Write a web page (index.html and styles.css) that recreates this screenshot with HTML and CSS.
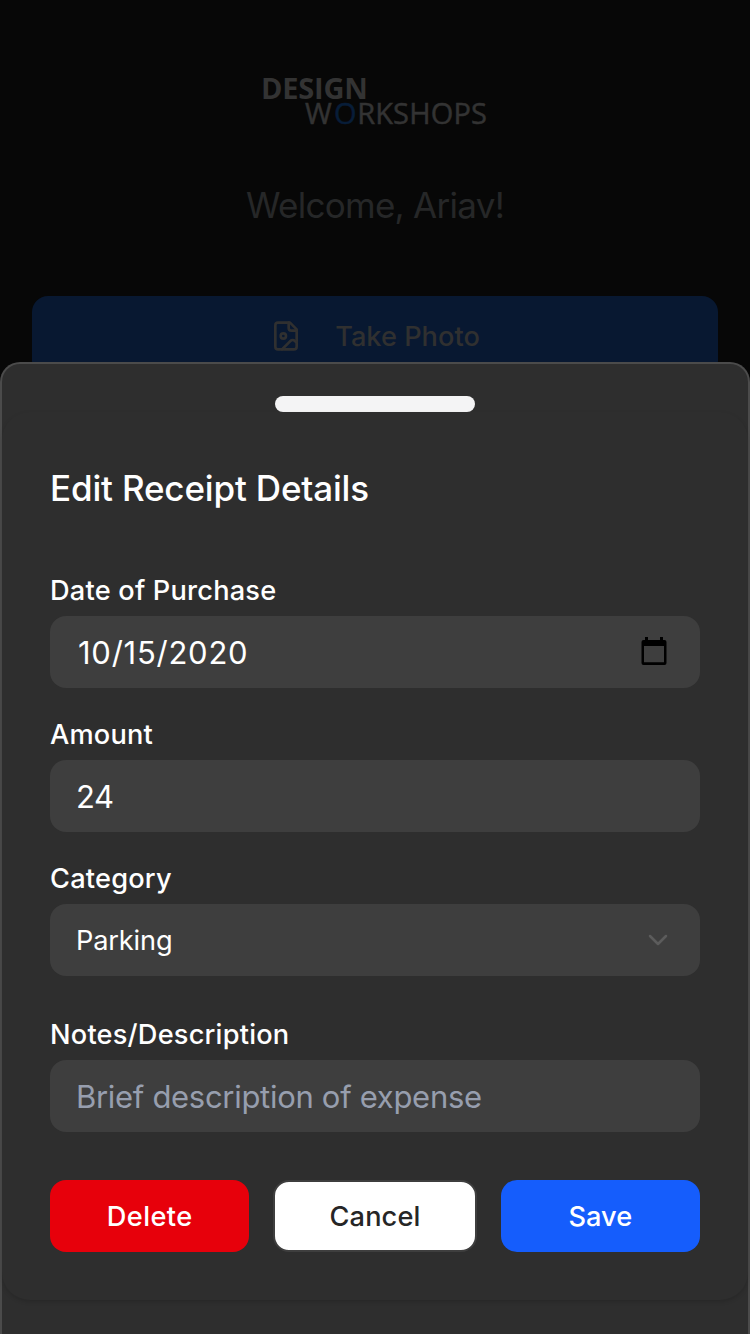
FILE: index.html
```html
<!DOCTYPE html>
<html lang="en">
  <head>
    <meta charset="utf-8">
    <title>Edit Receipt</title>
    <link rel="stylesheet" href="styles.css">
  </head>
  <body>
    <div class="home">
      <div class="logo">
        <div class="logo-top">DESIGN</div>
        <div class="logo-bottom">W<span>O</span>RKSHOPS</div>
      </div>
      <div class="welcome">Welcome, Ariav!</div>
      <div class="photo-button">
        <svg class="photo-icon" viewBox="0 0 24 24">
          <path d="M15 2H6a2 2 0 0 0-2 2v16a2 2 0 0 0 2 2h12a2 2 0 0 0 2-2V7Z"/>
          <path d="M14 2v4a2 2 0 0 0 2 2h4"/>
          <circle cx="10" cy="12" r="2"/>
          <path d="m20 17-1.296-1.296a2.41 2.41 0 0 0-3.408 0L9 22"/>
        </svg>
        <span>Take Photo</span>
      </div>
    </div>

    <div class="drawer">
      <div class="handle"></div>
      <form class="card">
        <h1>Edit Receipt Details</h1>

        <label for="date">Date of Purchase</label>
        <div class="field">
          <input id="date" class="date" value="10/15/2020">
          <svg class="calendar" viewBox="0 0 26 28">
            <path fill-rule="evenodd" d="M4 0h3v3h12V0h3v3h1.500a2 2 0 0 1 2 2v21a2 2 0 0 1-2 2h-21a2 2 0 0 1-2-2V5a2 2 0 0 1 2-2H4ZM3 9v16.300h20V9Z"/>
          </svg>
        </div>

        <label for="amount">Amount</label>
        <div class="field">
          <input id="amount" value="24">
        </div>

        <label>Category</label>
        <div class="field select">
          <span>Parking</span>
          <svg class="chevron" viewBox="0 0 20 12">
            <path d="M2 2l8 8 8-8"/>
          </svg>
        </div>

        <label for="notes" class="notes-label">Notes/Description</label>
        <div class="field">
          <input id="notes" placeholder="Brief description of expense">
        </div>

        <div class="buttons">
          <button type="button" class="delete">Delete</button>
          <button type="button" class="cancel">Cancel</button>
          <button type="button" class="save">Save</button>
        </div>
      </form>
    </div>
  </body>
</html>
```
FILE: styles.css
```css
html, body {
  margin: 0;
  width: 100%;
  height: 100%;
  overflow: hidden;
  background: #070707;
  font-family: Inter, 'Liberation Sans', sans-serif;
}

body {
  display: flex;
  flex-direction: column;
}

/* page behind the drawer */
.home {
  height: 362px;
  box-sizing: border-box;
  padding: 75px 32px 0;
  flex: none;
  overflow: hidden;
}

.logo {
  width: 228px;
  height: 53px;
  margin: 0 auto;
  color: #333;
  font-family: 'Open Sans', 'Noto Sans', sans-serif;
  font-size: 29px;
  line-height: 25px;
  white-space: nowrap;
}

.logo-top {
  font-weight: 700;
  letter-spacing: -0.2px;
}

.logo-bottom {
  padding-left: 44px;
  letter-spacing: 0.15px;
  -webkit-text-stroke: 0.5px;
}

.logo-bottom span {
  margin: 0 0.5px 0 2px;
  color: #071d38;
}

.welcome {
  margin-top: 53px;
  height: 48px;
  line-height: 48px;
  font-size: 35px;
  letter-spacing: -0.72px;
  text-align: center;
  color: #262728;
}

.photo-button {
  display: flex;
  justify-content: center;
  align-items: center;
  gap: 33px;
  margin-top: 67px;
  height: 80px;
  border-radius: 16px;
  background: #081831;
  color: #303030;
  font-size: 27.2px;
  font-weight: 500;
}

.photo-icon {
  width: 32px;
  height: 32px;
  fill: none;
  stroke: #303030;
  stroke-width: 2;
  stroke-linecap: round;
  stroke-linejoin: round;
}

/* drawer */
.drawer {
  flex: 1;
  box-sizing: border-box;
  border: 2px solid #4b4b4b;
  border-bottom: none;
  border-radius: 20px 20px 0 0;
  background: #2e2e2e;
  padding-top: 32px;
}

.handle {
  width: 200px;
  height: 16px;
  margin: 0 auto;
  border-radius: 8px;
  background: #f4f4f5;
}

.card {
  box-sizing: border-box;
  height: 888px;
  padding: 48px;
  border-radius: 28px;
  box-shadow: 0 2px 4px rgba(0, 0, 0, 0.15);
}

h1 {
  margin: 0 0 54px;
  font-size: 35px;
  line-height: 56px;
  font-weight: 500;
  letter-spacing: -0.17px;
  color: #fff;
}

label {
  display: block;
  height: 40px;
  line-height: 42px;
  margin: 26px 0 6px;
  font-size: 27.2px;
  font-weight: 500;
  letter-spacing: 0.2px;
  color: #fff;
}

.notes-label {
  margin-top: 38px;
}

.field {
  display: flex;
  align-items: center;
  justify-content: space-between;
  box-sizing: border-box;
  height: 72px;
  padding: 0 32px 0 26px;
  border-radius: 16px;
  background: #3e3e3e;
  color: #fff;
}

input {
  flex: 1;
  min-width: 0;
  padding: 0;
  border: none;
  outline: none;
  background: none;
  color: #fff;
  font-family: inherit;
  font-size: 31px;
  letter-spacing: -0.3px;
}

.date {
  padding-left: 2px;
  letter-spacing: 0.75px;
}

input::placeholder {
  color: #979eae;
}

.select {
  font-size: 27.2px;
  letter-spacing: -0.15px;
}

.calendar {
  width: 26px;
  height: 28px;
  margin: 0 1px 2px 0;
  fill: #000;
}

.chevron {
  width: 20px;
  height: 12px;
  fill: none;
  stroke: #5c5c5c;
  stroke-width: 2.5;
  stroke-linecap: round;
  stroke-linejoin: round;
}

.buttons {
  display: flex;
  gap: 24px;
  margin-top: 48px;
}

button {
  flex: 1;
  height: 72px;
  padding: 0;
  border: none;
  border-radius: 16px;
  color: #fff;
  font-family: inherit;
  font-size: 27.2px;
  font-weight: 500;
}

.delete {
  background: #e7000b;
  letter-spacing: 0.4px;
}

.cancel {
  border: 2px solid #3e3e3e;
  background: #fff;
  color: #262626;
  letter-spacing: 0.1px;
}

.save {
  background: #155dfc;
}
```
